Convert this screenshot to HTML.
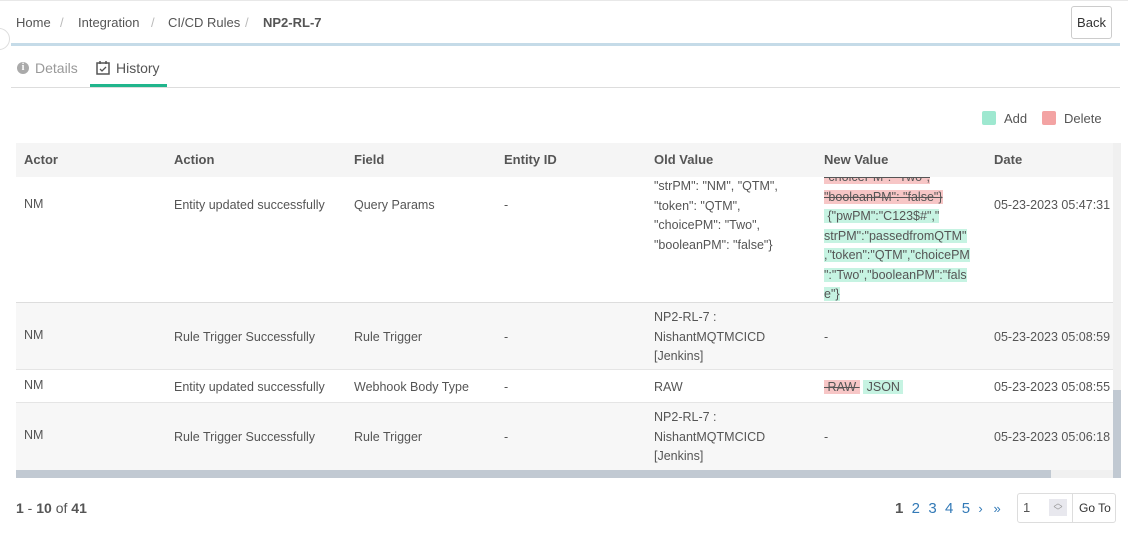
<!DOCTYPE html>
<html><head><meta charset="utf-8"><style>
*{margin:0;padding:0;box-sizing:border-box}
body{width:1128px;height:548px;background:#fff;font-family:"Liberation Sans",sans-serif;color:#555;font-size:13px;position:relative;overflow:hidden}
.a{position:absolute;white-space:nowrap}
.bc{top:15px;font-size:13px;color:#555}
.sep{color:#bbb}
.hdr{position:absolute;left:16px;top:143px;width:1097px;height:34px;background:#f5f5f5}
.h{position:absolute;top:152px;font-weight:bold;color:#555;font-size:13px}
.row{position:absolute;left:16px;width:1097px}
.t{position:absolute;font-size:12.5px;color:#555;line-height:19.5px}
.del{background:#f7c6c6;text-decoration:line-through}
.add{background:#c6f3e2}
</style></head><body>
<div class="a" style="left:0;top:0;width:1128px;height:1px;background:#e8e8e8"></div>
<div class="a bc" style="left:16px">Home</div>
<div class="a bc sep" style="left:60px">/</div>
<div class="a bc" style="left:78px">Integration</div>
<div class="a bc sep" style="left:151px">/</div>
<div class="a bc" style="left:168px">CI/CD Rules</div>
<div class="a bc sep" style="left:245px">/</div>
<div class="a bc" style="left:263px;font-weight:bold">NP2-RL-7</div>
<div class="a" style="left:1071px;top:6px;width:41px;height:33px;border:1px solid #ccc;border-radius:3px;font-size:13px;line-height:31px;text-align:center;color:#333">Back</div>
<div class="a" style="left:11px;top:43px;width:1109px;height:3px;background:#c5dbe8"></div>
<div class="a" style="left:-12px;top:28px;width:22px;height:22px;border-radius:50%;border:1px solid #ddd;background:#fff"></div>
<div class="a" style="left:17px;top:62px;width:12px;height:12px;border-radius:50%;background:#aaa;color:#fff;font-size:10px;font-weight:bold;text-align:center;line-height:12px;font-family:'Liberation Serif',serif">i</div>
<div class="a" style="left:35px;top:60px;color:#999;font-size:14px">Details</div>
<svg class="a" style="left:96px;top:60px" width="14" height="15" viewBox="0 0 14 15"><rect x="1" y="3" width="12" height="11" fill="none" stroke="#555" stroke-width="1.5"/><line x1="4" y1="1" x2="4" y2="4" stroke="#555" stroke-width="1.5"/><line x1="10" y1="1" x2="10" y2="4" stroke="#555" stroke-width="1.5"/><path d="M4 9l2 2 4-4" fill="none" stroke="#555" stroke-width="1.3"/></svg>
<div class="a" style="left:116px;top:60px;color:#555;font-size:14px">History</div>
<div class="a" style="left:90px;top:84px;width:77px;height:3px;background:#20b58c"></div>
<div class="a" style="left:11px;top:87px;width:1109px;height:1px;background:#ddd"></div>
<div class="a" style="left:982px;top:111px;width:14px;height:14px;background:#9ee8d0;border-radius:2px"></div>
<div class="a" style="left:1004px;top:111px;font-size:13px">Add</div>
<div class="a" style="left:1042px;top:111px;width:14px;height:14px;background:#f3a3a3;border-radius:2px"></div>
<div class="a" style="left:1064px;top:111px;font-size:13px">Delete</div>

<div class="hdr"></div>
<div class="a h" style="left:24px">Actor</div>
<div class="a h" style="left:174px">Action</div>
<div class="a h" style="left:354px">Field</div>
<div class="a h" style="left:504px">Entity ID</div>
<div class="a h" style="left:654px">Old Value</div>
<div class="a h" style="left:824px">New Value</div>
<div class="a h" style="left:994px">Date</div>

<div class="row" style="top:177px;height:126px;background:#fff;border-bottom:1px solid #ddd;overflow:hidden"></div>
<div style="position:absolute;left:0;top:177px;width:1113px;height:125px;overflow:hidden">
<div class="t" style="left:24px;top:18px">NM</div>
<div class="t" style="left:174px;top:19px">Entity updated successfully</div>
<div class="t" style="left:354px;top:19px">Query Params</div>
<div class="t" style="left:504px;top:19px">-</div>
<div class="t" style="left:654px;top:0px">"strPM": "NM", "QTM",<br>"token": "QTM",<br>"choicePM": "Two",<br>"booleanPM": "false"}</div>
<div class="t" style="left:824px;top:-9px;white-space:nowrap"><span class="del">"choicePM": "Two",</span><br><span class="del">"booleanPM": "false"}</span><br><span class="add">&nbsp;{"pwPM":"C123$#","</span><br><span class="add">strPM":"passedfromQTM"</span><br><span class="add">,"token":"QTM","choicePM</span><br><span class="add">":"Two","booleanPM":"fals</span><br><span class="add">e"}</span></div>
<div class="t" style="left:994px;top:19px">05-23-2023 05:47:31</div>
</div>
<div class="row" style="top:303px;height:67px;background:#f7f7f7;border-bottom:1px solid #e5e5e5"></div>
<div class="t a" style="left:24px;top:326px">NM</div>
<div class="t a" style="left:174px;top:328px">Rule Trigger Successfully</div>
<div class="t a" style="left:354px;top:328px">Rule Trigger</div>
<div class="t a" style="left:504px;top:328px">-</div>
<div class="t a" style="left:654px;top:308px">NP2-RL-7 :<br>NishantMQTMCICD<br>[Jenkins]</div>
<div class="t a" style="left:824px;top:328px">-</div>
<div class="t a" style="left:994px;top:328px">05-23-2023 05:08:59</div>
<div class="row" style="top:370px;height:33px;background:#fff;border-bottom:1px solid #e5e5e5"></div>
<div class="t a" style="left:24px;top:376px">NM</div>
<div class="t a" style="left:174px;top:378px">Entity updated successfully</div>
<div class="t a" style="left:354px;top:378px">Webhook Body Type</div>
<div class="t a" style="left:504px;top:378px">-</div>
<div class="t a" style="left:654px;top:378px">RAW</div>
<div class="t a" style="left:824px;top:378px"><span class="del">&nbsp;RAW&nbsp;</span> <span class="add">&nbsp;JSON&nbsp;</span></div>
<div class="t a" style="left:994px;top:378px">05-23-2023 05:08:55</div>
<div class="row" style="top:403px;height:67px;background:#f7f7f7"></div>
<div class="t a" style="left:24px;top:426px">NM</div>
<div class="t a" style="left:174px;top:428px">Rule Trigger Successfully</div>
<div class="t a" style="left:354px;top:428px">Rule Trigger</div>
<div class="t a" style="left:504px;top:428px">-</div>
<div class="t a" style="left:654px;top:408px">NP2-RL-7 :<br>NishantMQTMCICD<br>[Jenkins]</div>
<div class="t a" style="left:824px;top:428px">-</div>
<div class="t a" style="left:994px;top:428px">05-23-2023 05:06:18</div>
<div class="a" style="left:1113px;top:143px;width:8px;height:335px;background:#f0f0f0"></div>
<div class="a" style="left:1113px;top:390px;width:8px;height:88px;background:#c1c9d2"></div>
<div class="a" style="left:16px;top:470px;width:1097px;height:8px;background:#f0f0f0"></div>
<div class="a" style="left:16px;top:470px;width:1035px;height:8px;background:#c1c9d2"></div>

<div class="a" style="left:16px;top:500px;font-size:14px;color:#555"><b>1</b> - <b>10</b> of <b>41</b></div>
<div class="a" style="left:895px;top:500px;font-size:15px;color:#337ab7"><b style="color:#555">1</b>&nbsp; 2&nbsp; 3&nbsp; 4&nbsp; 5&nbsp; <span style="font-size:13px">›&nbsp;&nbsp; »</span></div>
<div class="a" style="left:1017px;top:493px;width:99px;height:30px;border:1px solid #ddd;border-radius:3px"></div>
<div class="a" style="left:1023px;top:500px;font-size:13px;color:#555">1</div>
<div class="a" style="left:1049px;top:499px;width:18px;height:17px;background:#e8e8ee;color:#999;font-size:9px;line-height:8px;text-align:center">︿<br>﹀</div>
<div class="a" style="left:1072px;top:493px;width:1px;height:30px;background:#ddd"></div>
<div class="a" style="left:1079px;top:501px;font-size:12px;color:#333">Go To</div>
</body></html>
